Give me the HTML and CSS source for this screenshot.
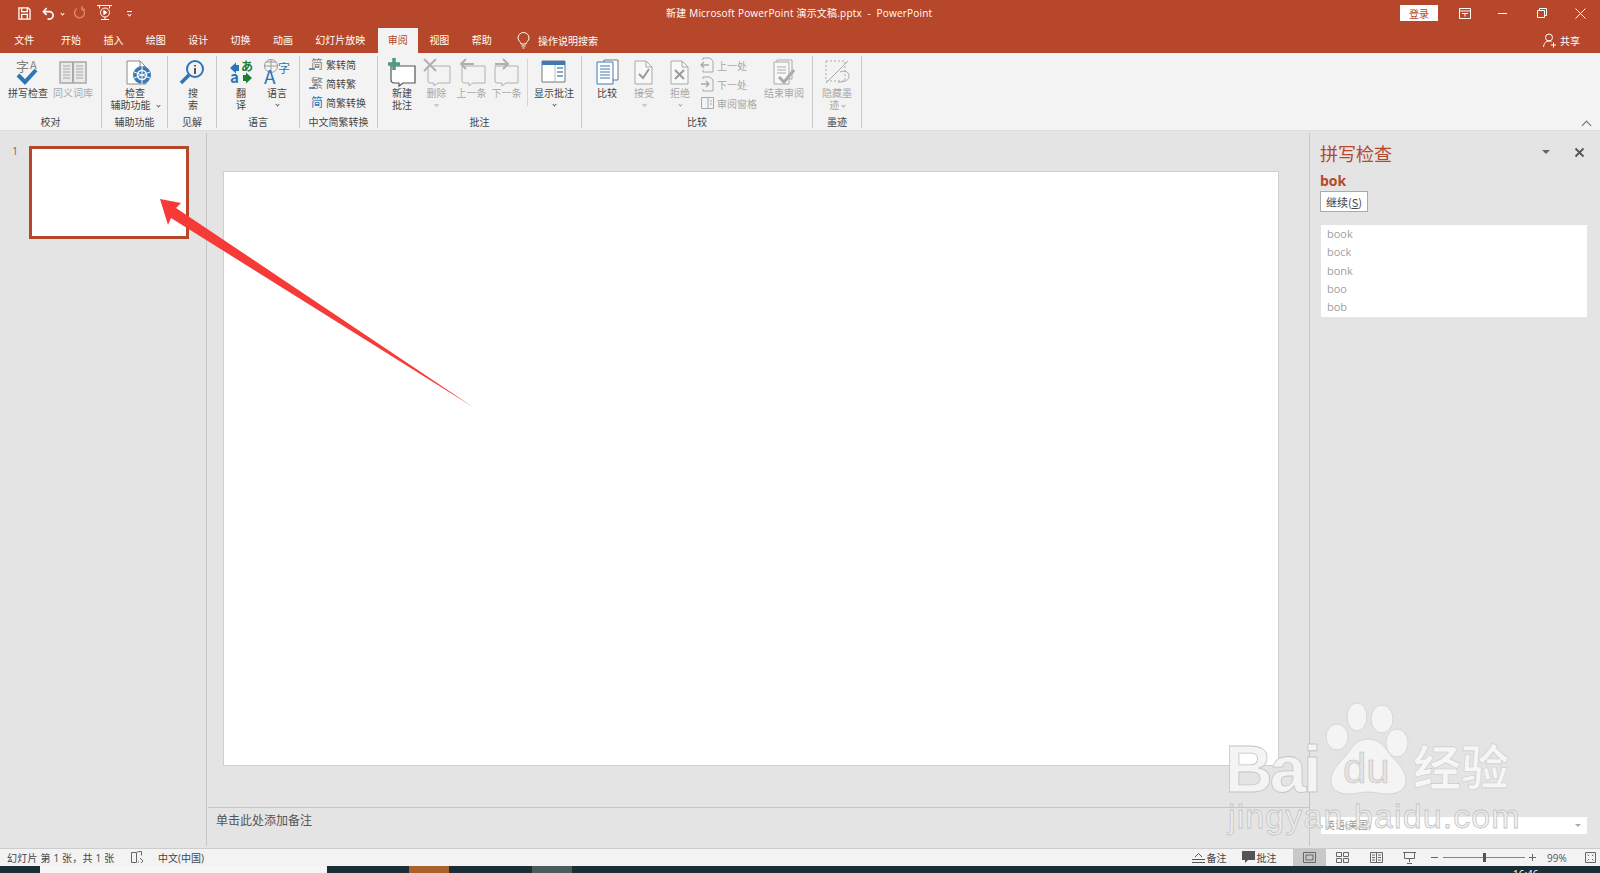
FILE: index.html
```html
<!DOCTYPE html>
<html lang="zh-CN">
<head>
<meta charset="utf-8">
<title>新建 Microsoft PowerPoint 演示文稿.pptx - PowerPoint</title>
<link rel="stylesheet" href="styles.css">
</head>
<body>
<div class="app">
  <header class="titlebar">
    <div class="qat">
      <svg class="q-save" width="13" height="13" viewBox="0 0 14 14" fill="none" stroke="#fff" stroke-width="1.4"><path d="M1 1h10l2 2v10H1z"/><path d="M4 1v4h6V1M4 13V8h6v5"/></svg>
      <svg class="q-undo" width="13" height="13" viewBox="0 0 14 14" fill="none" stroke="#fff" stroke-width="1.8"><path d="M5 1 1.500 5 5 8.500"/><path d="M2 5h6a4 4 0 0 1 0 8H6"/></svg>
      <i class="chev white q-c1"></i>
      <svg class="q-redo" width="12" height="14" viewBox="0 0 12 14" fill="none" stroke="#d98a70" stroke-width="1.400"><path d="M8 2.500A5 5 0 1 1 3 2.500"/><path d="M8 0v3.500h3"/></svg>
      <svg class="q-show" width="16" height="18" viewBox="0 0 16 18" fill="none" stroke="#fff" stroke-width="1"><path d="M0 1.500h15M2.500 1.500v3M12.500 1.500v3"/><circle cx="8" cy="8.500" r="4.500"/><path d="m6.800 6.500 3 2-3 2z" fill="#fff"/><path d="M4 15.500h8M8 13v2.500"/></svg>
      <span class="q-more"><i class="bar"></i><i class="chev white"></i></span>
    </div>
    <div class="doc-title">新建 Microsoft PowerPoint 演示文稿.pptx &nbsp;-&nbsp; PowerPoint</div>
    <div class="winctl">
      <button class="login">登录</button>
      <svg class="w-rib" width="12" height="11" viewBox="0 0 12 11" fill="none" stroke="#fff"><path d="M.5.500h11v10H.5zM.5 3h11M3 5.500h6M6 5.500v3"/></svg>
      <span class="w-min"></span>
      <svg class="w-res" width="10" height="10" viewBox="0 0 10 10" fill="none" stroke="#fff"><path d="M.5 2.500h7v7h-7zM2.500 2.500v-2h7v7h-2"/></svg>
      <svg class="w-close" width="11" height="11" viewBox="0 0 11 11" stroke="#fff"><path d="m.5.500 10 10M10.500.500l-10 10"/></svg>
    </div>
  </header>

  <nav class="tabs">
    <span class="tab first">文件</span><span class="tab">开始</span><span class="tab">插入</span><span class="tab">绘图</span><span class="tab">设计</span><span class="tab">切换</span><span class="tab">动画</span><span class="tab">幻灯片放映</span><span class="tab active">审阅</span><span class="tab">视图</span><span class="tab">帮助</span>
    <span class="tell">
      <svg width="13" height="16" viewBox="0 0 13 16" fill="none" stroke="#fff"><path d="M4 11c0-2-3-3-3-6a5.500 5.500 0 0 1 11 0c0 3-3 4-3 6zM4.500 13h4M5.500 15h2"/></svg>
      操作说明搜索
    </span>
    <span class="share">
      <svg width="14" height="15" viewBox="0 0 14 15" fill="none" stroke="#fff"><circle cx="6" cy="4.500" r="3.500"/><path d="M.5 14c.5-4 2.500-6 5.500-6 1 0 2 .2 2.500 .7M10.500 9.500v5M8 12h5"/></svg>
      共享
    </span>
  </nav>

  <section class="ribbon">
    <div class="group g-proof">
      <div class="g-body">
        <div class="rb w44">
          <svg class="ic" width="32" height="28" viewBox="0 0 32 28"><text x="4" y="14" class="glyph g13">字</text><text x="18" y="12" class="glyph g11">A</text><path d="m6 18 7 7L24 13" fill="none" stroke="#2e75b6" stroke-width="4"/></svg>
          <span>拼写检查</span>
        </div>
        <div class="rb w46 off">
          <svg class="ic" width="32" height="28" viewBox="0 0 32 28" fill="none" stroke="#a9a9a9"><path d="M3 5h26v21H3z" stroke-width="1.500" fill="#e9e9e9"/><path d="M16 5v21" stroke-width="2"/><path d="M6 9h7M6 12h7M6 15h7M6 18h7M6 21h7M19 9h7M19 12h7M19 15h7M19 18h7M19 21h7"/></svg>
          <span>同义词库</span>
        </div>
      </div>
      <div class="g-label">校对</div>
    </div>

    <div class="group g-a11y">
      <div class="g-body">
        <div class="rb w66">
          <svg class="ic" width="34" height="28" viewBox="-4 0 34 28" fill="none"><path d="M5 4h13l6 6v17H5z" stroke="#8a8a8a" fill="#fff"/><path d="M18 4v6h6" stroke="#8a8a8a"/><circle cx="20" cy="18" r="9" fill="#3d7ab5"/><circle cx="20" cy="18" r="4.500" stroke="#fff" stroke-width="1.500"/><path d="M20 9v18M12 15l16 6M12 21l16-6" stroke="#fff"/></svg>
          <span>检查</span>
          <span>辅助功能<i class="chev gap"></i></span>
        </div>
      </div>
      <div class="g-label">辅助功能</div>
    </div>

    <div class="group g-ins">
      <div class="g-body">
        <div class="rb w48">
          <svg class="ic" width="32" height="28" viewBox="0 0 32 28" fill="none"><circle cx="18" cy="12" r="8" stroke="#2e75b6" stroke-width="2"/><path d="m12 18-8 8" stroke="#2e75b6" stroke-width="3.500"/><path d="M18 8v1.500M18 11v6" stroke="#555" stroke-width="2"/></svg>
          <span>搜</span><span>索</span>
        </div>
      </div>
      <div class="g-label">见解</div>
    </div>

    <div class="group g-lang">
      <div class="g-body">
        <div class="rb w36 m-l">
          <svg class="ic" width="32" height="28" viewBox="0 0 32 28"><text x="16" y="14" class="glyph g12 green bold">あ</text><text x="5" y="26" class="glyph g15 blue bold">a</text><path d="M14 8v6H11v2.500L5 11l6-5.500V8z" fill="#2e75b6"/><path d="M18 18v6h3v2.500l6-5.500-6-5.500V18z" fill="#1e7b34"/></svg>
          <span>翻</span><span>译</span>
        </div>
        <div class="rb w36">
          <svg class="ic" width="32" height="28" viewBox="0 0 32 28" fill="none"><circle cx="10" cy="9" r="6.500" stroke="#999"/><path d="M3.500 9h13M10 2.500v13M5 5h10" stroke="#999"/><text x="3" y="27" class="glyph g19 blue">A</text><text x="17" y="16" class="glyph g12 blue">字</text></svg>
          <span>语言</span><i class="chev block"></i>
        </div>
      </div>
      <div class="g-label">语言</div>
    </div>

    <div class="group g-zh">
      <div class="g-stack">
        <div class="row"><svg width="15" height="16" viewBox="0 0 15 16"><text x="2" y="13" class="glyph g12">简</text><path d="M0 13h6" stroke="#2e75b6" stroke-width="1.500"/></svg><span>繁转简</span></div>
        <div class="row"><svg width="15" height="16" viewBox="0 0 15 16"><text x="2" y="13" class="glyph g12">繁</text><path d="M0 13h6" stroke="#2e75b6" stroke-width="1.500"/></svg><span>简转繁</span></div>
        <div class="row"><svg width="15" height="16" viewBox="0 0 15 16"><text x="2" y="13" class="glyph g12 blue">简</text></svg><span>简繁转换</span></div>
      </div>
      <div class="g-label">中文简繁转换</div>
    </div>

    <div class="group g-cmt">
      <div class="g-body">
        <div class="rb w34">
          <svg class="ic" width="32" height="28" viewBox="0 0 32 28" fill="none"><path d="M5 9h24v17H17l-4 3v-3H8a3 3 0 0 1-3-3z" stroke="#555" stroke-width="1.200" fill="#fff"/><path d="M8 1v12M2 7h12" stroke="#4f9a82" stroke-width="3.500"/></svg>
          <span>新建</span><span>批注</span>
        </div>
        <div class="rb w35 off">
          <svg class="ic" width="32" height="28" viewBox="0 0 32 28" fill="none" stroke="#b0b0b0"><path d="M7 9h22v17H17l-4 3v-3H9a2 2 0 0 1-2-2z"/><path d="m3 2 12 12M15 2 3 14" stroke-width="2"/></svg>
          <span>删除</span><i class="chev block"></i>
        </div>
        <div class="rb w35 off">
          <svg class="ic" width="32" height="28" viewBox="0 0 32 28" fill="none" stroke="#b0b0b0"><path d="M6 9h23v17H17l-4 3v-3H8a2 2 0 0 1-2-2z"/><path d="M18 7H5M10 2 5 7l5 5" stroke-width="2"/></svg>
          <span>上一条</span>
        </div>
        <div class="rb w35 off">
          <svg class="ic" width="32" height="28" viewBox="0 0 32 28" fill="none" stroke="#b0b0b0"><path d="M4 9h23v17H15l-4 3v-3H6a2 2 0 0 1-2-2z"/><path d="M4 7h13M12 2l5 5-5 5" stroke-width="2"/></svg>
          <span>下一条</span>
        </div>
        <div class="inner-sep"></div>
        <div class="rb w52">
          <svg class="ic" width="32" height="28" viewBox="0 0 32 28" fill="none"><path d="M4 4h23v21H4z" stroke="#777" fill="#fff"/><path d="M4 4h23v4H4z" fill="#3d7ab5"/><path d="M17 8v17" stroke="#bbb"/><path d="M19 11h6M19 15h6M19 19h6" stroke="#5b8fc0" stroke-width="1.500"/></svg>
          <span>显示批注</span><i class="chev block"></i>
        </div>
      </div>
      <div class="g-label">批注</div>
    </div>

    <div class="group g-cmp">
      <div class="g-body">
        <div class="rb w34">
          <svg class="ic" width="32" height="28" viewBox="0 0 32 28" fill="none"><path d="M13 3h14v20H13z" stroke="#777" fill="#fff"/><path d="M6 5h16v22H6z" stroke="#3d7ab5" fill="#fff"/><path d="M9 9h10M9 12h10M9 15h10M9 18h10M9 21h10" stroke="#3d7ab5"/></svg>
          <span>比较</span>
        </div>
        <div class="rb w40 off">
          <svg class="ic" width="32" height="28" viewBox="0 0 32 28" fill="none" stroke="#a9a9a9"><path d="M7 4h11l6 6v17H7z" fill="#f8f8f8"/><path d="M18 4v6h6"/><path d="m11 17 4 4 6-9" stroke="#999" stroke-width="2"/></svg>
          <span>接受</span><i class="chev block"></i>
        </div>
        <div class="rb w32 off">
          <svg class="ic" width="32" height="28" viewBox="0 0 32 28" fill="none" stroke="#a9a9a9"><path d="M7 4h11l6 6v17H7z" fill="#f8f8f8"/><path d="M18 4v6h6"/><path d="m11 13 9 9M20 13l-9 9" stroke="#999" stroke-width="2"/></svg>
          <span>拒绝</span><i class="chev block"></i>
        </div>
        <div class="g-stack off">
          <div class="row"><svg width="15" height="16" viewBox="0 0 15 16" fill="none" stroke="#a9a9a9"><path d="M3 3V1h7l3 3v11H3v-2"/><path d="M9 8H1M4 5 1 8l3 3" stroke-width="1.300"/></svg><span>上一处</span></div>
          <div class="row"><svg width="15" height="16" viewBox="0 0 15 16" fill="none" stroke="#a9a9a9"><path d="M3 3V1h7l3 3v11H3v-2"/><path d="M1 8h8M6 5l3 3-3 3" stroke-width="1.300"/></svg><span>下一处</span></div>
          <div class="row"><svg width="15" height="16" viewBox="0 0 15 16" fill="none" stroke="#a9a9a9"><path d="M1.500 2.500h12v11h-12z"/><path d="M8 2.500v11" /><path d="M10 6h2M10 9h2"/></svg><span>审阅窗格</span></div>
        </div>
        <div class="rb w40 off">
          <svg class="ic" width="32" height="28" viewBox="0 0 32 28" fill="none" stroke="#a9a9a9"><path d="M9 3h15v19H9z" fill="#f8f8f8"/><path d="M6 5h15v22H6z" fill="#f8f8f8"/><path d="M9 10h9M9 13h9M9 16h9"/><path d="m11 20 5 5 10-12" stroke="#aaa" stroke-width="3"/></svg>
          <span>结束审阅</span>
        </div>
      </div>
      <div class="g-label">比较</div>
    </div>

    <div class="group g-ink">
      <div class="g-body">
        <div class="rb w48 off">
          <svg class="ic" width="32" height="28" viewBox="0 0 32 28" fill="none" stroke="#a9a9a9"><path d="M5 4h19v20H5z" stroke-dasharray="2 2"/><path d="m5 26 22-22M19 15c5-2 9 0 9 4s-3 6-11 6"/></svg>
          <span>隐藏墨</span><span>迹 <i class="chev"></i></span>
        </div>
      </div>
      <div class="g-label">墨迹</div>
    </div>
    <i class="chev up collapse"></i>
  </section>

  <main class="workspace">
    <aside class="thumbs">
      <span class="num">1</span>
      <div class="thumb"></div>
    </aside>
    <div class="vsep"></div>
    <div class="center">
      <div class="stage"><div class="slide"></div></div>
      <div class="notes">单击此处添加备注</div>
    </div>
    <div class="vsep"></div>
    <aside class="pane">
      <div class="pane-head">
        <h2>拼写检查</h2>
        <span class="pane-drop"></span>
        <svg class="pane-x" width="9" height="9" viewBox="0 0 9 9" stroke="#555" stroke-width="1.800"><path d="m.5.500 8 8M8.500.500l-8 8"/></svg>
      </div>
      <div class="word">bok</div>
      <button class="resume">继续(<u>S</u>)</button>
      <ul class="suggest">
        <li>book</li><li>bock</li><li>bonk</li><li>boo</li><li>bob</li>
      </ul>
      <div class="spacer"></div>
      <div class="lang-select"><span>英语(美国)</span><i class="pane-drop small"></i></div>
    </aside>
  </main>

  <footer class="status">
    <span class="s-count">幻灯片 第 1 张，共 1 张</span>
    <svg class="s-book" width="13" height="13" viewBox="0 0 13 13" fill="none" stroke="#666"><path d="M.5 1.500h5v10h-5zM5.500 1.500c1-1 3-1 5-1v4M7 11h1M9 7l3 3-2 2"/></svg>
    <span>中文(中国)</span>
    <span class="s-right">
      <span class="s-item s-notes"><svg width="13" height="12" viewBox="0 0 13 12" stroke="#555" fill="none"><path d="M0 7.500h13M0 10.500h13M3 5l3.500-3.500L10 5"/></svg>备注</span>
      <span class="s-item s-cmt"><svg width="13" height="13" viewBox="0 0 13 13" fill="#555"><path d="M0 0h13v9H6l-3 3V9H0z"/></svg>批注</span>
      <span class="view active"><svg width="13" height="11" viewBox="0 0 13 11" fill="none" stroke="#666"><path d="M.5.500h12v10H.5zM3 3h7v5H3z"/></svg></span>
      <span class="view"><svg width="13" height="11" viewBox="0 0 13 11" fill="none" stroke="#666"><path d="M.5.500h5v4h-5zM7.500.500h5v4h-5zM.5 6.500h5v4h-5zM7.500 6.500h5v4h-5z"/></svg></span>
      <span class="view"><svg width="13" height="11" viewBox="0 0 13 11" fill="none" stroke="#666"><path d="M.5.500h12v10H.5zM6.500.500v10M2 3h3M2 5.500h3M2 8h3M8 3h3M8 5.500h3M8 8h3"/></svg></span>
      <span class="view"><svg width="13" height="12" viewBox="0 0 13 12" fill="none" stroke="#666"><path d="M0 .500h13M1.500.500v6h10v-6M6.500 6.500V10M4 11.500h5"/></svg></span>
      <span class="zoom">
        <i class="z-minus"></i>
        <span class="z-track"><i class="z-thumb"></i></span>
        <i class="z-plus"></i>
      </span>
      <span class="z-val">99%</span>
      <svg class="s-fit" width="11" height="11" viewBox="0 0 11 11" fill="none" stroke="#666"><path d="M.5.500h10v10H.5zM2.500 2.500 4 4M8.500 2.500 7 4M2.500 8.500 4 7M8.500 8.500 7 7"/></svg>
    </span>
  </footer>

  <div class="taskbar">
    <i class="tk t-dark1"></i><i class="tk t-white"></i><i class="tk t-dark2"></i><i class="tk t-orange"></i><i class="tk t-dark2b"></i><i class="tk t-gray"></i>
    <span class="clock">16:46</span>
  </div>

  <svg class="arrow" width="330" height="220" viewBox="0 0 330 220"><path d="M1 1 22 5 17 10 314 209 12 20 9 27z" fill="#f63a38"/></svg>

  <svg class="wm" width="300" height="150" viewBox="0 0 300 150">
    <g class="wm-paw">
      <ellipse cx="115" cy="47" rx="11" ry="13"/><ellipse cx="135" cy="27" rx="10" ry="14"/><ellipse cx="160" cy="29" rx="11" ry="14"/><ellipse cx="175" cy="53" rx="11" ry="14"/>
      <path d="M146 49c-13 0-17 11-24 19-7 7-13 14-13 23 0 8 7 13 17 13 8 0 13-2 20-2s12 2 20 2c10 0 18-5 18-13 0-9-6-16-13-23-7-8-11-19-25-19z"/>
    </g>
    <text x="3" y="102" class="wm-big">Bai</text>
    <text x="121" y="93" class="wm-du">du</text>
    <text x="191" y="95" class="wm-cn">经验</text>
    <text x="6" y="138" class="wm-url">jingyan.baidu.com</text>
  </svg>
</div>
</body>
</html>
```
FILE: styles.css
```css
* { box-sizing: border-box; }
html, body { margin: 0; padding: 0; }
body { width: 1600px; height: 873px; overflow: hidden; font-family: "Open Sans", "Noto Sans CJK SC", sans-serif; font-size: 10px; color: #444; }
.app { position: relative; width: 1600px; height: 873px; display: flex; flex-direction: column; background: #e4e4e4; }
svg { overflow: visible; }

/* title bar */
.titlebar { height: 28px; background: #b7472a; display: flex; align-items: center; position: relative; color: #fff; padding-bottom: 2px; }
.qat { width: 666px; display: flex; align-items: center; flex: none; }
.q-save { margin-left: 18px; }
.q-undo { margin-left: 11px; }
.q-c1 { margin-left: 6px; }
.q-redo { margin-left: 10px; }
.q-show { margin-left: 11px; }
.q-more { margin-left: 14px; display: flex; flex-direction: column; align-items: center; gap: 1px; }
.bar { display: block; width: 5px; height: 1px; background: #fff; }
.doc-title { flex: none; width: 280px; white-space: nowrap; font-size: 10px; letter-spacing: .2px; margin-bottom: 2px; }
.winctl { flex: 1; display: flex; align-items: center; }
.login { margin-left: 454px; width: 38px; height: 16px; border: 0; padding: 0; background: #fff; color: #b7472a; font: 10px "Noto Sans CJK SC", sans-serif; }
.w-rib { margin-left: 21px; }
.w-min { margin-left: 27px; width: 9px; height: 1px; background: #fff; }
.w-res { margin-left: 30px; }
.w-close { margin-left: 28px; }

/* tabs */
.tabs { height: 25px; background: #b7472a; display: flex; align-items: center; color: #fff; padding-left: 3px; flex: none; }
.tab { padding: 0 11.2px; height: 25px; line-height: 24px; flex: none; }
.tab.first { margin-right: 4.500px; }
.tab.active { background: #f3f3f3; color: #b7472a; margin-left: 1.500px; padding: 0 10.500px 0 9.700px; }
.tell { margin-left: 14px; display: flex; align-items: center; gap: 8px; }
.share { margin-left: auto; margin-right: 20px; display: flex; align-items: center; gap: 3px; }

/* ribbon */
.ribbon { height: 78px; background: #f3f3f3; display: flex; position: relative; flex: none; border-bottom: 1px solid #dcdcdc; }
.group { margin: 3px 0 2px; height: 72px; display: flex; flex-direction: column; border-right: 1px solid #c9c9c9; flex: none; }
.g-body { height: 61px; display: flex; }
.g-label { height: 11px; line-height: 11px; text-align: center; color: #444; }
.g-proof { width: 102px; }
.g-proof .g-body { padding-left: 6px; }
.g-a11y { width: 66px; }
.g-ins { width: 49px; }
.g-ins .g-body { padding-left: 1px; }
.g-lang { width: 83px; }
.g-lang .m-l { margin-left: 6px; }
.g-zh { width: 78px; }
.g-zh .g-stack { height: 61px; padding: 0 0 0 9px; }
.g-cmt { width: 204px; }
.g-cmt .g-body { padding-left: 7px; }
.g-cmp { width: 231px; }
.g-cmp .g-body { padding-left: 8px; }
.g-ink { width: 49px; }
.rb { display: flex; flex-direction: column; align-items: center; flex: none; line-height: 12px; white-space: nowrap; }
.rb .ic { display: block; margin: 1px 0 2px; flex: none; }
.w32 { width: 32px; } .w34 { width: 34px; } .w35 { width: 35px; } .w36 { width: 36px; } .w40 { width: 40px; } .w44 { width: 44px; } .w46 { width: 46px; } .w48 { width: 48px; } .w52 { width: 52px; } .w66 { width: 66px; }
.off, .off .row { color: #a8a8a8; }
.inner-sep { width: 1px; height: 47px; margin: 3px 0 0 3px; background: #d4d4d4; }
.g-stack { display: flex; flex-direction: column; gap: 3px; padding-top: 1px; flex: none; width: 78px; }
.g-cmp .g-stack { width: 64px; margin-left: 4px; }
.row { display: flex; align-items: center; height: 16px; gap: 2px; white-space: nowrap; }
.row svg { flex: none; }
.glyph { fill: #808080; font-family: "Noto Sans CJK SC", sans-serif; }
.bold { font-weight: 700; }
.g11 { font-size: 11px; } .g12 { font-size: 12px; } .g13 { font-size: 13px; } .g15 { font-size: 15px; } .g19 { font-size: 19px; }
.blue { fill: #2e75b6; } .green { fill: #1e7b34; }
.chev { display: inline-block; width: 3px; height: 3px; border-right: 1px solid #666; border-bottom: 1px solid #666; transform: rotate(45deg); vertical-align: 2px; }
.chev.gap { margin-left: 6px; }
.chev.white { border-color: #fff; }
.chev.block { display: block; margin-top: 4px; }
.off .chev { border-color: #aaa; }
.chev.up { position: absolute; right: 10px; bottom: 1px; width: 7px; height: 7px; transform: rotate(-135deg); }

/* workspace */
.workspace { height: 717px; display: flex; flex: none; }
.thumbs { width: 206px; flex: none; position: relative; }
.num { position: absolute; left: 12px; top: 12px; color: #c0583a; font-size: 11px; }
.thumb { position: absolute; left: 29px; top: 15px; width: 160px; height: 93px; background: #fff; border: 3px solid #b7472a; }
.vsep { width: 1px; flex: none; margin: 2px 0 2px; background: #c6c6c6; }
.center { flex: 1; display: flex; flex-direction: column; }
.stage { height: 676px; padding: 40px 30px 0 16px; }
.slide { height: 595px; background: #fff; border: 1px solid #cfcfcf; }
.notes { height: 41px; border-top: 1px solid #c6c6c6; margin-left: 1px; padding: 3px 0 0 8px; font-size: 12px; line-height: 17px; color: #555; font-family: "Noto Sans CJK SC", sans-serif; }
.pane { width: 290px; flex: none; padding: 0 13px 14px 10px; display: flex; flex-direction: column; }
.pane-head { height: 42px; display: flex; align-items: center; position: relative; padding-top: 1px; }
.pane-head h2 { margin: 0; font-size: 18px; font-weight: 400; color: #b7472a; font-family: "Noto Sans CJK SC", sans-serif; }
.pane-drop { position: absolute; left: 222px; top: 19px; width: 0; height: 0; border: 4px solid transparent; border-top: 4px solid #666; border-bottom: 0; }
.pane-x { position: absolute; left: 255px; top: 17px; }
.word { height: 18px; line-height: 15px; font-size: 14px; font-weight: 700; color: #b7472a; }
.resume { width: 48px; height: 21px; padding: 0; background: #fff; border: 1px solid #aaa; color: #444; font: 11px "Noto Sans CJK SC", sans-serif; }
.suggest { list-style: none; margin: 13px 0 0 1px; padding: 0 0 0 6px; width: 266px; background: #fff; height: 92px; }
.suggest li { height: 18.300px; line-height: 17.300px; font-size: 11px; color: #a0a0a0; }
.spacer { flex: 1; }
.lang-select { height: 17px; background: #fff; position: relative; margin-left: 1px; padding-left: 4px; line-height: 17px; color: #999; width: 266px; }
.pane-drop.small { left: 254px; top: 7px; border-top-color: #aaa; border-width: 3px; border-bottom: 0; }

/* status bar */
.status { height: 18px; background: #f3f3f3; border-top: 1px solid #ccc; display: flex; align-items: center; padding-left: 7px; flex: none; color: #444; }
.s-count { width: 124px; letter-spacing: .2px; }
.s-book { margin-right: 14px; }
.s-right { margin-left: auto; display: flex; align-items: center; height: 17px; }
.s-item { display: flex; align-items: center; gap: 2px; }
.s-notes { width: 50px; }
.s-cmt { width: 51px; }
.view { width: 33.500px; height: 17px; display: flex; align-items: center; justify-content: center; }
.view.active { background: #c8c8c8; }
.zoom { display: flex; align-items: center; width: 120.500px; padding-left: 4px; }
.z-minus { width: 7px; height: 1px; background: #666; }
.z-track { width: 82px; height: 1px; background: #888; margin: 0 4px 0 5px; position: relative; }
.z-thumb { position: absolute; left: 40px; top: -4px; width: 3px; height: 9px; background: #555; }
.z-plus { width: 7px; height: 7px; background: linear-gradient(#666,#666) center/7px 1px no-repeat, linear-gradient(#666,#666) center/1px 7px no-repeat; }
.z-val { width: 36px; color: #555; }
.s-fit { margin-right: 4px; margin-left: 2px; }

/* taskbar */
.taskbar { height: 7px; background: #1b2e36; display: flex; flex: none; position: relative; overflow: hidden; }
.tk { display: block; height: 7px; flex: none; }
.t-dark1 { width: 40px; }
.t-white { width: 287px; background: #f6f6f6; }
.t-dark2 { width: 82px; }
.t-orange { width: 40px; background: #a9622b; }
.t-dark2b { width: 83px; }
.t-gray { width: 40px; background: #4b5a5c; }
.clock { position: absolute; left: 1513px; top: 2px; color: #fff; font-size: 10px; line-height: 12px; }

/* overlays */
.arrow { position: absolute; left: 159px; top: 198px; }
.wm { position: absolute; left: 1222px; top: 690px; }
.wm-paw { fill: #f4f4f4; stroke: #cfcfcf; stroke-width: .8; }
.wm-big { font: 700 66px "Liberation Sans", sans-serif; fill: #f4f4f4; stroke: #c4c4c4; stroke-width: .8; letter-spacing: -3px; }
.wm-du { font: 400 42px "Liberation Sans", sans-serif; fill: #e4e4e4; stroke: #bdbdbd; stroke-width: .6; }
.wm-cn { font: 700 48px "Noto Sans CJK SC", sans-serif; fill: #f6f6f6; stroke: #cccccc; stroke-width: .6; }
.wm-url { font: 400 34px "Liberation Sans", sans-serif; fill: #f1f1f1; fill-opacity: .85; stroke: #c4c4c4; stroke-width: .8; letter-spacing: 1.100px; }
```
